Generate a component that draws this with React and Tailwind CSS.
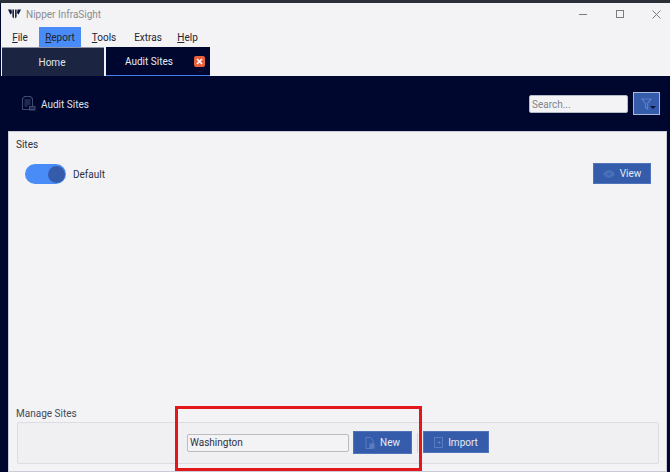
import React from "react";

const Logo = () => (
  <svg width="13" height="10" viewBox="0 0 13 10" fill="#0b1330">
    <path d="M0 .5h3.4l.6 3.4L2.4 5.4zM4.4.5h1.5v7.700L5.200 9.500 4.400 7.500zM7.100.5h1.500v7L7.800 9.500 7.100 8.200zM9.600.5H13l-2.400 5L9 3.900z" />
  </svg>
);

const BuildingIcon = () => (
  <svg width="16" height="17" viewBox="0 0 16 17" fill="none" stroke="#3f4a70" strokeWidth="1">
    <path d="M3 1.500h7v1.500h1.500v11.500h-10V3H3z" />
    <path d="M3.500 5h6M3.500 7h6M3.500 9h6M3.500 11h3" />
    <rect x="8" y="11" width="6.500" height="4.500" fill="#3f4a70" stroke="none" />
    <path d="M9 13h4.500" stroke="#00072e" />
  </svg>
);

const Funnel = () => (
  <svg width="11" height="12" viewBox="0 0 11 12" fill="none" stroke="#5f80c4" strokeWidth="1.200">
    <path d="M1 1h9L6.600 5.500v5.500L4.400 9.500v-4z" />
  </svg>
);

const Eye = () => (
  <svg width="12" height="8" viewBox="0 0 12 8" fill="#4a70ba">
    <path d="M0 4C2 1.300 3.800 0 6 0s4 1.300 6 4c-2 2.700-3.800 4-6 4S2 6.700 0 4z" />
    <circle cx="6" cy="4" r="1.800" fill="#3c63af" />
  </svg>
);

const NewFile = () => (
  <svg width="10" height="12" viewBox="0 0 10 12" fill="none" stroke="#5b7dc0" strokeWidth="1">
    <path d="M1 .5h4.500l2.500 2.500v8.500H1z" />
    <rect x="4.500" y="6.500" width="5" height="5" fill="#5b7dc0" stroke="none" />
  </svg>
);

const ImportFile = () => (
  <svg width="9" height="11" viewBox="0 0 9 11" fill="none" stroke="#5b7dc0" strokeWidth="1">
    <path d="M.5.5h8v10h-8z" />
    <path d="M3 5.500h3M5 4l1.500 1.500L5 7" />
  </svg>
);

function Btn({ icon, children, className }) {
  return (
    <button className={`flex items-center justify-center gap-[5px] bg-[#345cab] border border-[#4f74bb] text-[#e6eaf4] text-[10px] ${className}`}>
      {icon}
      <span>{children}</span>
    </button>
  );
}

export default function App() {
  return (
    <div className="relative w-[670px] h-[472px] overflow-hidden bg-[#00072e] font-['Roboto',sans-serif] flex flex-col">
      <div className="h-[3px] bg-[#2b2f38] shrink-0" />
      <div className="bg-[#f3f3f6] shrink-0 h-[73px] ml-px flex flex-col">
        <div className="h-[24px] flex items-center pl-[7px] pb-[2px] shrink-0">
          <Logo />
          <span className="ml-[5px] text-[#8a8c92] text-[10px]">Nipper InfraSight</span>
          <div className="ml-auto flex items-center gap-[29px] pr-[9px]">
            <div className="w-[8px] h-px bg-[#7c7c7c]" />
            <div className="w-[8px] h-[8px] border border-[#7c7c7c]" />
            <svg className="-ml-px" width="9" height="9" viewBox="0 0 9 9" stroke="#7c7c7c" strokeWidth="1"><path d="M.5.5l8 8M8.500.5l-8 8" /></svg>
          </div>
        </div>
        <div className="h-[20px] flex items-stretch text-[10px] text-[#1f2430] shrink-0 pl-[5px]">
          <span className="w-[28px] pt-px flex items-center justify-center"><span><u>F</u>ile</span></span>
          <span className="w-[5px]" />
          <span className="w-[42px] pt-px bg-[#4a8cf7] flex items-center justify-center"><span><u>R</u>eport</span></span>
          <span className="w-[10px]" />
          <span className="w-[26px] pt-px flex items-center justify-center"><span><u>T</u>ools</span></span>
          <span className="w-[18px]" />
          <span className="w-[26px] pt-px flex items-center justify-center">Extras</span>
          <span className="w-[15px]" />
          <span className="w-[23px] pt-px flex items-center justify-center"><span><u>H</u>elp</span></span>
        </div>
        <div className="flex-1 flex items-end gap-[2px] pl-px">
          <div className="w-[102px] h-[29px] pt-px pr-[2px] bg-[#1b2440] text-[#e3e6ee] text-[10px] flex items-center justify-center border-t border-[#8d93a5]">Home</div>
          <div className="relative w-[104px] h-[29px] bg-[#00072e] text-[#e8ebf3] text-[10px] flex items-center pl-[19px] border-b border-[#3f7ff0]">
            Audit Sites
            <span className="absolute right-[5px] top-[9px] w-[11px] h-[11px] rounded-[2px] bg-[#e8603c] flex items-center justify-center">
              <svg width="7" height="7" viewBox="0 0 7 7" stroke="#fff" strokeWidth="1.600"><path d="M1 1l5 5M6 1l-5 5" /></svg>
            </span>
          </div>
        </div>
      </div>

      <div className="h-[55px] shrink-0 flex items-center pl-[21px] pr-[10px]">
        <BuildingIcon />
        <span className="ml-[4px] text-[#dfe3ec] text-[10px] relative top-px">Audit Sites</span>
        <input
          placeholder="Search..."
          className="ml-auto w-[99px] h-[18px] rounded-[2px] bg-[#f3f3f6] border border-[#b5b9c6] px-[2px] pt-px text-[10px] placeholder:text-[#80848c] outline-none"
        />
        <div className="relative ml-[5px] w-[27px] h-[23px] bg-[#345cab] border border-[#a9b9dc] flex items-center justify-center">
          <Funnel />
          <span className="absolute right-[3px] bottom-[5px] w-0 h-0 border-x-[3px] border-x-transparent border-t-[3px] border-t-[#0b1330]" />
        </div>
      </div>

      <div className="flex-1 ml-[8px] mr-[3px] bg-[#f3f3f6] border border-[#c9ccd6] flex flex-col min-h-0 px-[7px]">
        <div className="text-[10px] text-[#2c3140] mt-[6px] leading-[14px]">Sites</div>
        <div className="flex items-center mt-[12px] h-[20px]">
          <div className="ml-[9px] w-[41px] h-[20px] rounded-full bg-[#4a8cf7] flex items-center justify-end pr-px">
            <div className="w-[17px] h-[17px] rounded-full bg-[#345cab]" />
          </div>
          <span className="ml-[7px] text-[10px] text-[#2c3140]">Default</span>
          <Btn icon={<Eye />} className="ml-auto mr-[8px] mb-px w-[58px] h-[21px]">View</Btn>
        </div>
        <div className="flex-1" />
        <div className="text-[10px] text-[#454a58] leading-[14px] mb-[2px] relative top-px">Manage Sites</div>
        <div className="h-[42px] mb-[7px] ml-px border border-[#dcdde2] rounded-[2px] bg-[#f0f0f3] flex items-center pl-[169px]">
          <input
            readOnly
            value="Washington"
            className="w-[162px] h-[18px] rounded-[2px] bg-[#f3f3f6] border border-[#bcbcc0] px-[2px] pb-px text-[10px] text-[#2c3140] outline-none"
          />
          <Btn icon={<NewFile />} className="ml-[4px] mb-px w-[59px] h-[23px]">New</Btn>
          <div className="w-px h-[20px] bg-[#d4d5da] ml-[5px]" />
          <Btn icon={<ImportFile />} className="ml-[5px] mb-[2px] w-[66px] h-[22px]">Import</Btn>
        </div>
      </div>

      <div className="absolute left-[175px] top-[406px] w-[247px] h-[65px] border-[3px] border-[#e3161b] pointer-events-none" />
    </div>
  );
}
